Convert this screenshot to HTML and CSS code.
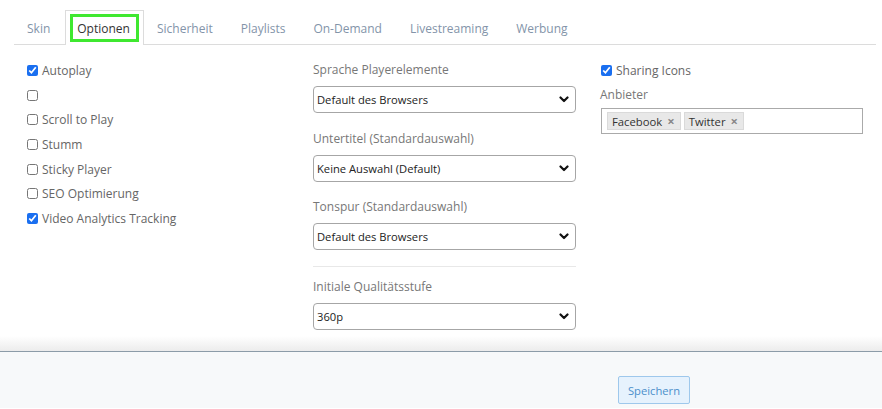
FILE: index.html
```html
<!DOCTYPE html>
<html lang="de">
<head>
  <meta charset="UTF-8" />
  <title>Player Einstellungen</title>
  <link rel="stylesheet" href="styles.css">
</head>
<body>

  <div class="main">
    <ul class="tabs">
      <li class="tab"><span class="tab-link">Skin</span></li>
      <li class="tab active"><span class="tab-link">Optionen</span></li>
      <li class="tab"><span class="tab-link">Sicherheit</span></li>
      <li class="tab"><span class="tab-link">Playlists</span></li>
      <li class="tab"><span class="tab-link">On-Demand</span></li>
      <li class="tab"><span class="tab-link">Livestreaming</span></li>
      <li class="tab"><span class="tab-link">Werbung</span></li>
    </ul>

    <div class="columns">
      <div class="col col-checks">
        <label class="check"><input type="checkbox" checked> Autoplay</label>
        <label class="check"><input type="checkbox"></label>
        <label class="check"><input type="checkbox"> Scroll to Play</label>
        <label class="check"><input type="checkbox"> Stumm</label>
        <label class="check"><input type="checkbox"> Sticky Player</label>
        <label class="check"><input type="checkbox"> SEO Optimierung</label>
        <label class="check"><input type="checkbox" checked> Video Analytics Tracking</label>
      </div>

      <div class="col">
        <div class="field">
          <div class="field-label">Sprache Playerelemente</div>
          <div class="select-wrap">
            <select><option>Default des Browsers</option></select>
            <svg class="chevron" width="10" height="7" viewBox="0 0 10 7"><path d="M1.5 1.5 L5 5 L8.5 1.5" fill="none" stroke="#111" stroke-width="2.2" stroke-linecap="round" stroke-linejoin="round"/></svg>
          </div>
        </div>
        <div class="field">
          <div class="field-label">Untertitel (Standardauswahl)</div>
          <div class="select-wrap">
            <select><option>Keine Auswahl (Default)</option></select>
            <svg class="chevron" width="10" height="7" viewBox="0 0 10 7"><path d="M1.5 1.5 L5 5 L8.5 1.5" fill="none" stroke="#111" stroke-width="2.2" stroke-linecap="round" stroke-linejoin="round"/></svg>
          </div>
        </div>
        <div class="field">
          <div class="field-label">Tonspur (Standardauswahl)</div>
          <div class="select-wrap">
            <select><option>Default des Browsers</option></select>
            <svg class="chevron" width="10" height="7" viewBox="0 0 10 7"><path d="M1.5 1.5 L5 5 L8.5 1.5" fill="none" stroke="#111" stroke-width="2.2" stroke-linecap="round" stroke-linejoin="round"/></svg>
          </div>
        </div>
        <hr class="divider">
        <div class="field">
          <div class="field-label">Initiale Qualitätsstufe</div>
          <div class="select-wrap">
            <select><option>360p</option></select>
            <svg class="chevron" width="10" height="7" viewBox="0 0 10 7"><path d="M1.5 1.5 L5 5 L8.5 1.5" fill="none" stroke="#111" stroke-width="2.2" stroke-linecap="round" stroke-linejoin="round"/></svg>
          </div>
        </div>
      </div>

      <div class="col col-checks">
        <label class="check"><input type="checkbox" checked> Sharing Icons</label>
        <div class="field-label provider-label">Anbieter</div>
        <div class="multi">
          <span class="tag">Facebook <span class="tag-x">×</span></span>
          <span class="tag">Twitter <span class="tag-x">×</span></span>
        </div>
      </div>
    </div>
  </div>

  <div class="footer">
    <button class="save-btn">Speichern</button>
  </div>

</body>
</html>
```

FILE: styles.css
```css
body {
  margin: 0;
  font-family: 'Open Sans', sans-serif;
  font-size: 12px;
  color: #333;
  background: #fff;
  height: 409px;
  overflow: hidden;
}

.main {
  height: 352px;
  box-sizing: border-box;
  padding-top: 10px;
  background: linear-gradient(to bottom, #fff 0, #fff 336px, #ececec 351px);
  border-bottom: 1px solid #8c9ca8;
}

.tabs {
  list-style: none;
  margin: 0 6px 0 14px;
  padding: 0;
  display: flex;
  border-bottom: 1px solid #dcdcdc;
  height: 34px;
}

.tab {
  padding: 0 14px 0 12px;
  display: flex;
  align-items: center;
  color: #8394a9;
  margin-bottom: -1px;
  border: 1px solid transparent;
  border-bottom: none;
}

.tab.active {
  color: #333;
  background: #fff;
  border-color: #dcdcdc;
  padding: 3px 4px 0 4px;
  height: 35px;
  box-sizing: border-box;
  align-items: flex-start;
}

.tab.active .tab-link {
  border: 3px solid #3fe830;
  padding: 0 6px 0 4px;
  height: 28px;
  box-sizing: border-box;
  display: flex;
  align-items: center;
}

.columns {
  display: grid;
  grid-template-columns: 263px 263px 263px;
  gap: 24px;
  padding: 14px 0 0 26px;
}

.col {
  display: flex;
  flex-direction: column;
}

.col-checks {
  margin-top: -1px;
}

.check {
  display: flex;
  align-items: center;
  height: 24.7px;
  color: #666;
  gap: 4px;
}

.check input {
  margin: 0 0 0 1px;
  width: 11px;
  height: 11px;
  accent-color: #1a6ff0;
}

.field {
  display: flex;
  flex-direction: column;
}

.field-label {
  color: #777;
  height: 22px;
  line-height: 22px;
  margin-bottom: 5px;
}

.provider-label {
  margin: 1px 0 2px 0;
}

.select-wrap {
  position: relative;
  margin-bottom: 14.5px;
}

.select-wrap select {
  appearance: none;
  width: 100%;
  height: 27px;
  border: 1px solid #a6a6a6;
  border-radius: 4px;
  background: #fff;
  font-family: 'Open Sans', sans-serif;
  font-size: 11.2px;
  color: #222;
  padding: 0 3px;
}

.chevron {
  position: absolute;
  right: 7px;
  top: 10px;
  pointer-events: none;
}

.divider {
  border: none;
  border-top: 1px solid #e8e8e8;
  margin: 1.5px 0 9px 0;
}

.multi {
  border: 1px solid #aaa;
  height: 26px;
  box-sizing: border-box;
  margin-left: 1px;
  display: flex;
  align-items: center;
  gap: 3px;
  padding: 0 5px;
}

.tag {
  background: #e8e8e8;
  border: 1px solid #dadada;
  font-size: 11.3px;
  color: #333;
  padding: 0 5px 0 4px;
  height: 18px;
  line-height: 16px;
  box-sizing: border-box;
}

.tag-x {
  color: #888;
  font-weight: bold;
  font-size: 13px;
  margin-left: 2px;
}

.footer {
  background: #f7f9fa;
  height: 56px;
  display: flex;
  align-items: flex-start;
  padding: 24px 0 0 618px;
  box-sizing: border-box;
}

.save-btn {
  background: #e6f2fd;
  border: 1px solid #9ec8ec;
  border-radius: 2px;
  color: #4b8fcb;
  font-family: 'Open Sans', sans-serif;
  font-size: 11.2px;
  height: 28px;
  width: 72px;
  padding: 0;
  cursor: pointer;
}
```
